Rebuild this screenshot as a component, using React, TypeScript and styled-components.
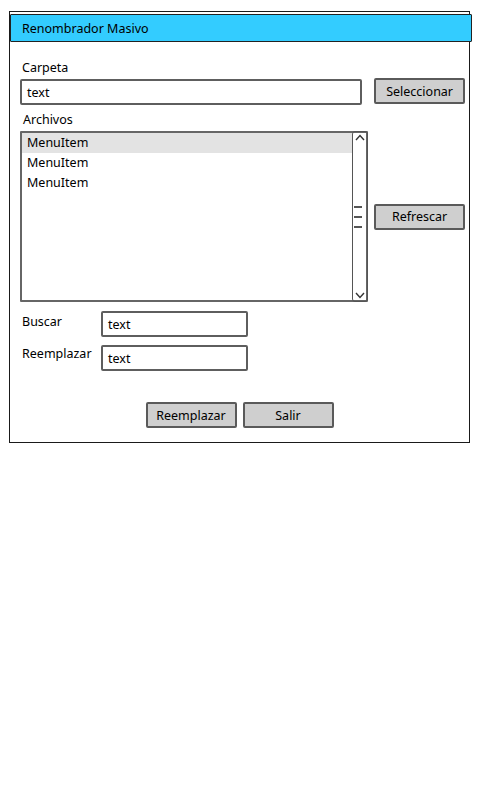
import styled, { createGlobalStyle } from "styled-components";

const GlobalStyle = createGlobalStyle`
  body {
    margin: 0;
    background: #ffffff;
    font-family: "Noto Sans", "DejaVu Sans", sans-serif;
    color: #000000;
  }
`;

const Window = styled.div`
  box-sizing: border-box;
  margin: 11px 0 0 9px;
  width: 461px;
  height: 432px;
  border: 1px solid #1a1a1a;
  display: flex;
  flex-direction: column;
`;

const TitleBar = styled.div`
  box-sizing: border-box;
  margin: 2px -3px 0 0;
  height: 28px;
  background: #33ccff;
  border: 1px solid #222222;
  border-radius: 1px;
  padding-left: 11px;
  display: flex;
  align-items: center;
  font-size: 12.5px;
`;

const Body = styled.div`
  display: flex;
  flex-direction: column;
  padding: 18px 4px 0 10px;
`;

const Label = styled.div<{ $indent?: number }>`
  font-size: 12.5px;
  line-height: 16px;
  padding-left: ${({ $indent }) => $indent ?? 2}px;
`;

const Row = styled.div<{ $gap: number; $align?: string }>`
  display: flex;
  align-items: ${({ $align }) => $align ?? "flex-start"};
  gap: ${({ $gap }) => $gap}px;
`;

const TextInput = styled.div<{ $width: number }>`
  box-sizing: border-box;
  width: ${({ $width }) => $width}px;
  height: 26px;
  border: 2px solid #5e5e5e;
  border-radius: 2px;
  padding-left: 5px;
  display: flex;
  align-items: center;
  font-size: 12.5px;
`;

const Button = styled.div<{ $width?: number }>`
  box-sizing: border-box;
  width: ${({ $width }) => $width ?? 91}px;
  height: 26px;
  background: #cfcfcf;
  border: 2px solid #5a5a5a;
  border-radius: 2px;
  display: flex;
  align-items: center;
  justify-content: center;
  font-size: 12.5px;
`;

const ListBox = styled.div`
  box-sizing: border-box;
  width: 349px;
  height: 171px;
  border: 2px solid #666666;
  border-radius: 1px;
  display: flex;
`;

const Items = styled.div`
  flex: 1;
  display: flex;
  flex-direction: column;
`;

const Item = styled.div<{ $selected?: boolean }>`
  height: 20px;
  line-height: 20px;
  padding-left: 5px;
  font-size: 12.5px;
  background: ${({ $selected }) => ($selected ? "#e3e3e3" : "transparent")};
`;

const ScrollBar = styled.div`
  box-sizing: border-box;
  width: 16px;
  margin: -2px -2px -2px 0;
  border: 1.5px solid #555555;
  border-radius: 3px;
  display: flex;
  flex-direction: column;
  align-items: center;
  justify-content: space-between;
  padding: 2px 0;
`;

const Grip = styled.div`
  display: flex;
  flex-direction: column;
  gap: 8px;
  align-self: flex-start;
  margin-left: 1px;
`;

const GripLine = styled.div`
  width: 8px;
  height: 2px;
  background: #555555;
`;

const FieldRow = styled.div`
  display: grid;
  grid-template-columns: 79px 147px;
  align-items: start;
  margin-left: 2px;
`;

const FooterButtons = styled.div`
  display: flex;
  justify-content: center;
  gap: 6px;
  margin: 31px 0 0 -6px;
`;

const Chevron = ({ up }: { up?: boolean }) => (
  <svg width="10" height="7" viewBox="0 0 10 7">
    <path
      d={up ? "M1 6 L5 1.5 L9 6" : "M1 1 L5 5.5 L9 1"}
      fill="none"
      stroke="#333"
      strokeWidth="1.4"
    />
  </svg>
);

export default function App() {
  return (
    <>
      <GlobalStyle />
      <Window>
        <TitleBar>Renombrador Masivo</TitleBar>
        <Body>
          <Label>Carpeta</Label>
          <Row $gap={12} style={{ marginTop: 3 }}>
            <TextInput $width={343}>text</TextInput>
            <Button $width={91} style={{ marginTop: -1 }}>
              Seleccionar
            </Button>
          </Row>
          <Label $indent={3} style={{ marginTop: 7 }}>
            Archivos
          </Label>
          <Row $gap={6} $align="center" style={{ marginTop: 3 }}>
            <ListBox>
              <Items>
                <Item $selected>MenuItem</Item>
                <Item>MenuItem</Item>
                <Item>MenuItem</Item>
              </Items>
              <ScrollBar>
                <Chevron up />
                <Grip>
                  <GripLine />
                  <GripLine />
                  <GripLine />
                </Grip>
                <Chevron />
              </ScrollBar>
            </ListBox>
            <Button $width={91}>Refrescar</Button>
          </Row>
          <FieldRow style={{ marginTop: 9 }}>
            <Label $indent={0} style={{ marginTop: 3 }}>
              Buscar
            </Label>
            <TextInput $width={147}>text</TextInput>
          </FieldRow>
          <FieldRow style={{ marginTop: 8 }}>
            <Label $indent={0} style={{ marginTop: 1 }}>
              Reemplazar
            </Label>
            <TextInput $width={147}>text</TextInput>
          </FieldRow>
          <FooterButtons>
            <Button>Reemplazar</Button>
            <Button>Salir</Button>
          </FooterButtons>
        </Body>
      </Window>
    </>
  );
}
